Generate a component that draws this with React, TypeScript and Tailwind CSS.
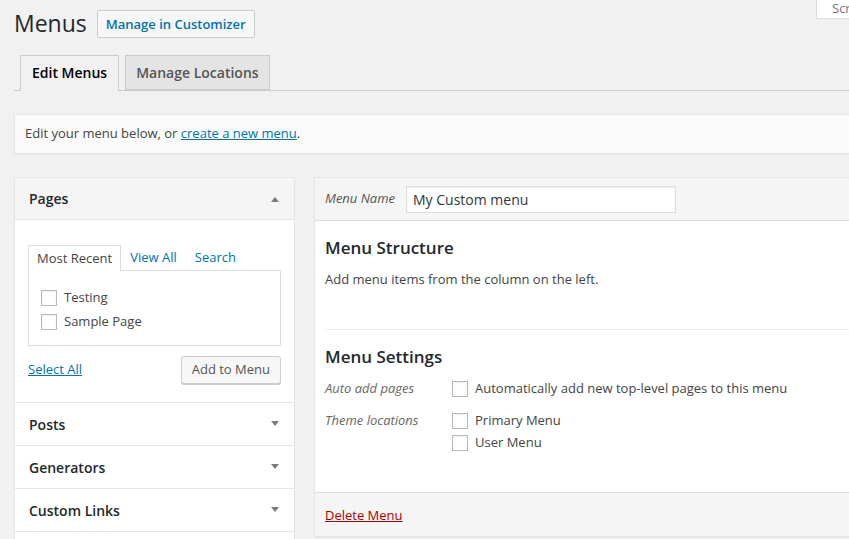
import React from 'react';

function Arrow({ up = false }: { up?: boolean }) {
  return (
    <svg width="10" height="6" viewBox="0 0 10 6" className="shrink-0">
      <path d={up ? 'M1 6 L5 1 L9 6 Z' : 'M1 0 L5 5 L9 0 Z'} fill="#787c82" />
    </svg>
  );
}

function Checkbox() {
  return (
    <span className="inline-block w-[16px] h-[16px] shrink-0 border border-[#b4b9be] bg-white shadow-[inset_0_1px_2px_rgba(0,0,0,0.07)]" />
  );
}

function Section({ title }: { title?: string }) {
  return (
    <div className="h-[43px] border-t border-[#e5e5e5] bg-white flex items-center justify-between pl-[14px] pr-[14px]">
      {title && <span className="text-[14px] font-semibold text-[#23282d]">{title}</span>}
      {title && <Arrow />}
    </div>
  );
}

export default function App() {
  return (
    <div
      className="w-[849px] h-[539px] overflow-hidden bg-[#f1f1f1] text-[#444]"
      style={{ fontFamily: '"Open Sans", "Noto Sans", sans-serif' }}
    >
      <div className="w-[940px] pl-[14px] pr-[14px]">
        {/* Header row */}
        <div className="flex items-start justify-between">
          <div className="flex items-center gap-[10px] pt-[10px]">
            <h1 className="text-[23px] leading-[27px] font-normal text-[#23282d] -mt-[1px]">Menus</h1>
            <button className="h-[28px] px-[8px] border border-[#ccc] bg-[#f7f7f7] rounded-[2px] text-[13px] font-semibold text-[#0073aa] leading-[26px]">
              Manage in Customizer
            </button>
          </div>
          <div className="h-[19px] w-[110px] bg-white border border-t-0 border-[#ddd] pl-[15px] text-[13px] leading-[16px] text-[#72777c]">
            Screen Options
          </div>
        </div>

        {/* Tabs */}
        <div className="mt-[17px] flex border-b border-[#ccc] h-[36px]">
          <div className="ml-[6px] h-[36px] px-[11px] border border-[#ccc] border-b-0 bg-[#f1f1f1] text-[14px] font-semibold leading-[34px] text-black">
            Edit Menus
          </div>
          <div className="ml-[6px] h-[35px] px-[10px] border border-[#ccc] bg-[#e4e4e4] text-[14px] font-semibold leading-[33px] text-[#555]">
            Manage Locations
          </div>
        </div>

        {/* Notice */}
        <div className="mt-[23px] h-[40px] bg-[#fbfbfb] border border-[#e5e5e5] shadow-[0_1px_1px_rgba(0,0,0,0.04)] pl-[10px] flex items-center text-[13px]">
          <span>
            Edit your menu below, or{' '}
            <a className="text-[#0073aa] underline">create a new menu</a>.
          </span>
        </div>

        {/* Columns */}
        <div className="mt-[23px] flex items-start gap-[19px]">
          {/* Left */}
          <div className="w-[281px] shrink-0 border border-[#e5e5e5] shadow-[0_1px_1px_rgba(0,0,0,0.04)] bg-white">
            <div className="-mt-px">
              <div className="h-[43px] bg-[#f5f5f5] border-t border-b border-[#e5e5e5] flex items-center justify-between pl-[14px] pr-[14px]">
                <span className="text-[14px] font-semibold text-[#23282d]">Pages</span>
                <Arrow up />
              </div>
              <div className="pl-[13px] pr-[13px] pt-[25px] pb-[18px] bg-white">
                <div className="flex h-[26px] text-[13px] leading-[25px]">
                  <div className="px-[8px] border border-[#ddd] border-b-0 bg-white text-[#444] relative z-10 h-[26px]">Most Recent</div>
                  <div className="px-[9px] text-[#0073aa]">View All</div>
                  <div className="px-[9px] text-[#0073aa]">Search</div>
                </div>
                <div className="-mt-px border border-[#ddd] h-[76px] pl-[12px] pt-[19px] flex flex-col gap-[8px] text-[13px]">
                  <label className="flex items-center gap-[7px] h-[16px]">
                    <Checkbox />
                    <span>Testing</span>
                  </label>
                  <label className="flex items-center gap-[7px] h-[16px]">
                    <Checkbox />
                    <span>Sample Page</span>
                  </label>
                </div>
                <div className="mt-[10px] flex items-center justify-between">
                  <a className="text-[13px] text-[#0073aa] underline">Select All</a>
                  <button className="h-[28px] px-[10px] border border-[#ccc] bg-[#f7f7f7] rounded-[3px] shadow-[0_1px_0_#ccc] text-[13px] text-[#555]">
                    Add to Menu
                  </button>
                </div>
              </div>
              <Section title="Posts" />
              <Section title="Generators" />
              <Section title="Custom Links" />
              <Section />
            </div>
          </div>

          {/* Right */}
          <div className="flex-1 border border-[#e5e5e5] bg-white shadow-[0_1px_1px_rgba(0,0,0,0.04)]">
            <div className="h-[43px] bg-[#f5f5f5] border-b border-[#ddd] flex items-center pl-[10px]">
              <span className="text-[13px] italic text-[#555] w-[81px]">Menu Name</span>
              <div className="w-[270px] h-[27px] border border-[#ddd] bg-white shadow-[inset_0_1px_2px_rgba(0,0,0,0.07)] pl-[6px] text-[14px] leading-[25px] text-[#32373c]">
                My Custom menu
              </div>
            </div>
            <div className="pl-[10px] pr-[10px]">
              <h3 className="mt-[15px] text-[17px] leading-[24px] font-semibold text-[#23282d]">Menu Structure</h3>
              <p className="mt-[10px] text-[13px] leading-[18px]">Add menu items from the column on the left.</p>
              <div className="mt-[41px] border-t border-[#eee]" />
              <h3 className="mt-[15px] text-[17px] leading-[24px] font-semibold text-[#23282d]">Menu Settings</h3>
              <div className="mt-[12px] flex items-center text-[13px] h-[16px]">
                <span className="w-[127px] italic text-[#666]">Auto add pages</span>
                <label className="flex items-center gap-[7px]">
                  <Checkbox />
                  <span>Automatically add new top-level pages to this menu</span>
                </label>
              </div>
              <div className="mt-[16px] flex items-start text-[13px] pb-[41px]">
                <span className="w-[127px] italic text-[#666] leading-[16px] -mt-[1px]">Theme locations</span>
                <div className="flex flex-col gap-[6px]">
                  <label className="flex items-center gap-[7px] h-[16px]">
                    <Checkbox />
                    <span>Primary Menu</span>
                  </label>
                  <label className="flex items-center gap-[7px] h-[16px]">
                    <Checkbox />
                    <span>User Menu</span>
                  </label>
                </div>
              </div>
            </div>
            <div className="h-[44px] bg-[#f5f5f5] border-t border-[#ddd] flex items-center pl-[10px] pt-[2px]">
              <a className="text-[13px] text-[#a00] underline">Delete Menu</a>
            </div>
          </div>
        </div>
      </div>
    </div>
  );
}
